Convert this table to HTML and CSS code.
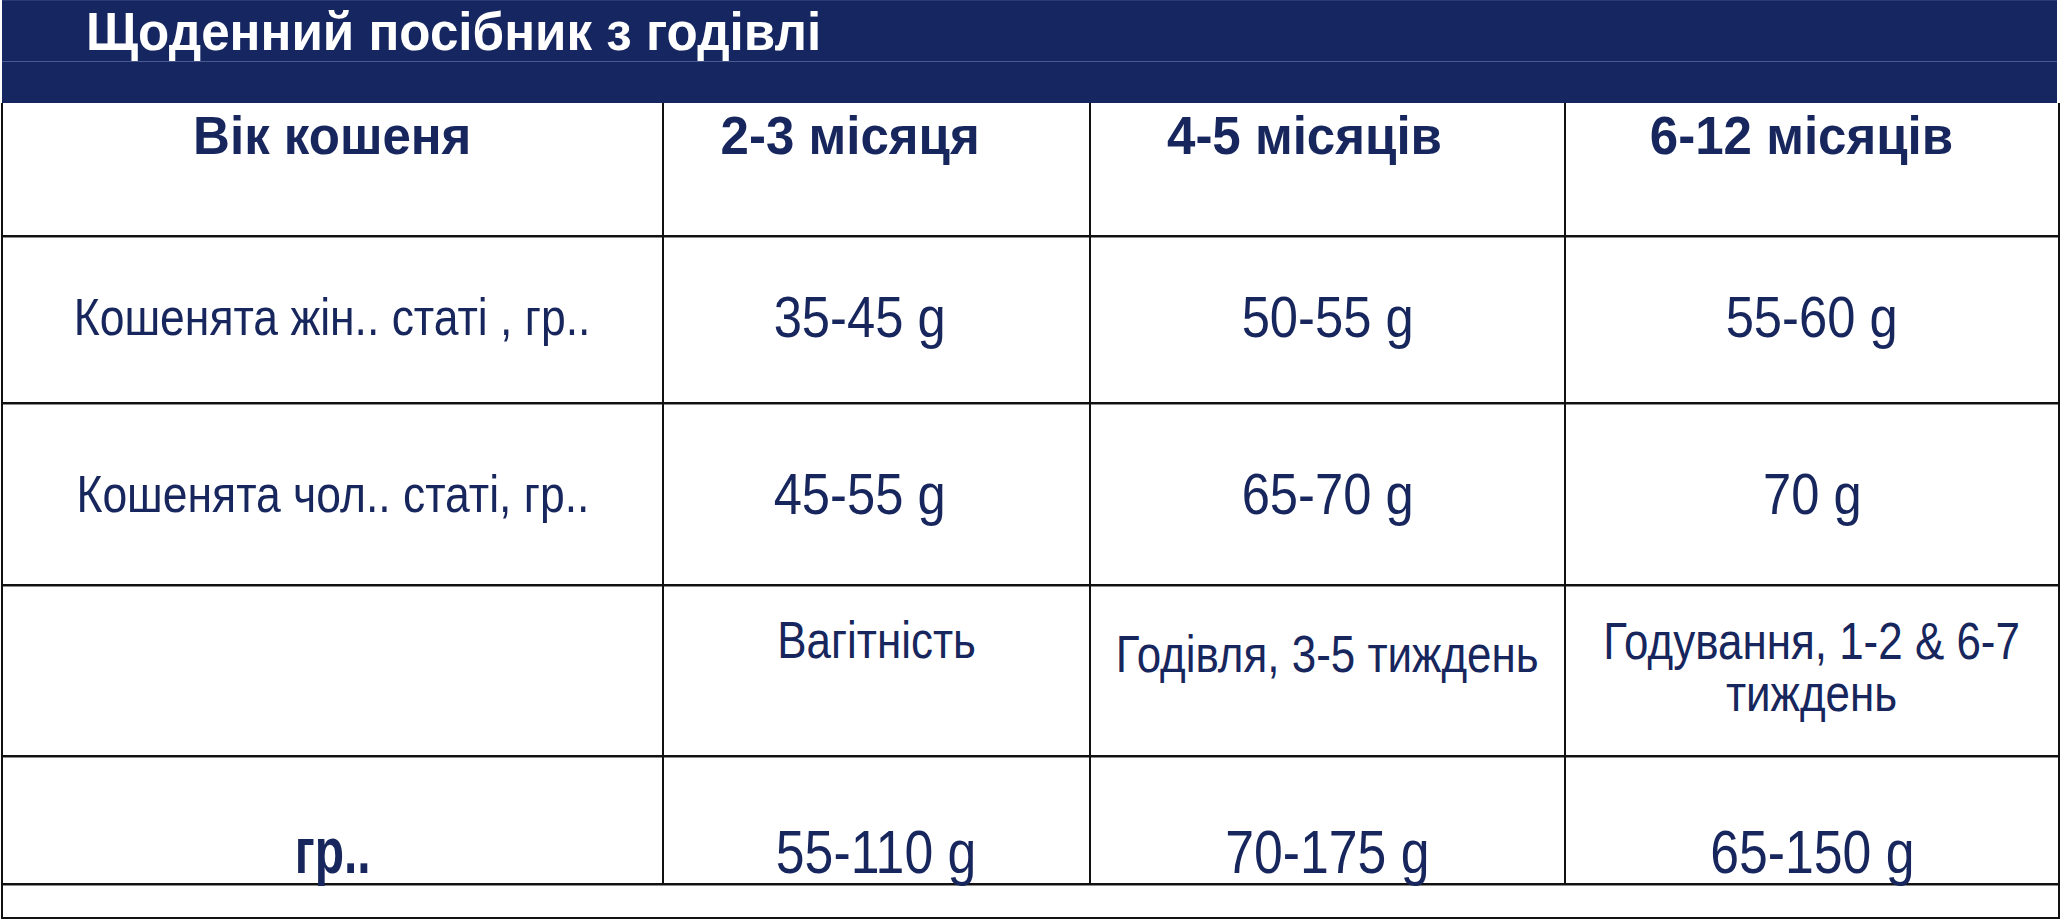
FILE: index.html
```html
<!DOCTYPE html>
<html lang="uk">
<head>
<meta charset="utf-8">
<title>Щоденний посібник з годівлі</title>
<link rel="stylesheet" href="styles.css">
</head>
<body>
<div class="banner">
  <div class="title-bar"><h1 class="title"><span class="title-text">Щоденний посібник з годівлі</span></h1></div>
  <div class="sub-bar"></div>
</div>
<table class="guide">
  <colgroup>
    <col class="c1"><col class="c2"><col class="c3"><col class="c4">
  </colgroup>
  <tr class="r-head">
    <th><span class="sx">Вік кошеня</span></th>
    <th class="h2"><span class="sx">2-3 місяця</span></th>
    <th class="h3"><span class="sx">4-5 місяців</span></th>
    <th class="h4"><span class="sx">6-12 місяців</span></th>
  </tr>
  <tr class="r-mid r-f">
    <td class="label"><span class="sx">Кошенята жін.. статі , гр..</span></td>
    <td class="num shift"><span class="sx">35-45 g</span></td>
    <td class="num"><span class="sx">50-55 g</span></td>
    <td class="num"><span class="sx">55-60 g</span></td>
  </tr>
  <tr class="r-mid r-m">
    <td class="label"><span class="sx">Кошенята чол.. статі, гр..</span></td>
    <td class="num shift"><span class="sx">45-55 g</span></td>
    <td class="num"><span class="sx">65-70 g</span></td>
    <td class="num"><span class="sx">70 g</span></td>
  </tr>
  <tr class="r-stage">
    <td></td>
    <td class="stage s-a"><span class="sx">Вагітність</span></td>
    <td class="stage s-b"><span class="sx wide">Годівля, 3-5 тиждень</span></td>
    <td class="stage s-c"><span class="sx wide">Годування, 1-2 &amp; 6-7<br>тиждень</span></td>
  </tr>
  <tr class="r-total">
    <td class="total-label"><span class="sx">гр..</span></td>
    <td class="big"><span class="sx">55-110 g</span></td>
    <td class="big"><span class="sx">70-175 g</span></td>
    <td class="big"><span class="sx">65-150 g</span></td>
  </tr>
  <tr class="r-end">
    <td colspan="4"></td>
  </tr>
</table>
</body>
</html>
```

FILE: styles.css
```css
html, body {
  margin: 0;
  padding: 0;
  background: #ffffff;
}

body {
  width: 2060px;
  height: 920px;
  overflow: hidden;
  font-family: "Liberation Sans", Arial, sans-serif;
  color: #17265c;
}

.banner {
  margin-left: 2px;
  width: 2055px;
  height: 103px;
  background: #162660;
  border-top: 1px solid #2c3b72;
  box-sizing: border-box;
}

.title-bar {
  height: 61px;
  border-bottom: 1px solid #4a5a8e;
  box-sizing: border-box;
}

.title {
  margin: 0;
  padding: 2px 0 0 84px;
  font-size: 53px;
  line-height: 58px;
  font-weight: bold;
  color: #ffffff;
  white-space: nowrap;
}

.title-text {
  display: inline-block;
  transform-origin: 0 50%;
  transform: scaleX(0.965);
}

.sub-bar {
  height: 41px;
}

.guide {
  margin-left: 1px;
  width: 2057px;
  border-collapse: collapse;
  table-layout: fixed;
}

.c1 { width: 661px; }
.c2 { width: 427px; }
.c3 { width: 475px; }
.c4 { width: 494px; }

.guide th,
.guide td {
  border: 2px solid #111111;
  padding: 0;
  text-align: center;
  line-height: 1;
  white-space: nowrap;
  box-shadow: inset 0 1px 0 #8c8c8c;
}

.sx {
  display: inline-block;
  transform-origin: 50% 50%;
  transform: scaleX(var(--sx, 1));
}

.wide {
  margin: 0 -50px;
}

/* header row */
.r-head { height: 133px; }

.guide .r-head th {
  border-top: none;
  box-shadow: none;
  vertical-align: top;
  padding-top: 5px;
  font-size: 54px;
  font-weight: bold;
  --sx: 0.945;
}

.guide .r-head .h2 { padding-right: 52px; }
.guide .r-head .h3 { padding-right: 47px; }
.guide .r-head .h4 { padding-right: 21px; }

/* weight rows */
.r-f { height: 167px; }
.r-m { height: 182px; }

.r-mid td {
  vertical-align: middle;
}

.guide .r-f td { padding-bottom: 5px; }

.label {
  font-size: 52px;
  --sx: 0.855;
}

.num {
  font-size: 57px;
  --sx: 0.89;
}

.guide .shift { padding-right: 33px; }

/* stage row */
.r-stage { height: 171px; }

.r-stage td {
  vertical-align: top;
  font-size: 52px;
  --sx: 0.845;
}

.guide .s-a { padding-top: 28px; }
.guide .s-b { padding-top: 42px; }
.guide .s-c { padding-top: 29px; line-height: 52px; }

/* total row */
.r-total { height: 128px; }

.r-total td {
  vertical-align: bottom;
}

.big {
  font-size: 62px;
  --sx: 0.835;
}

.total-label {
  font-size: 64px;
  font-weight: bold;
  --sx: 0.75;
}

.r-end { height: 34px; }
```
